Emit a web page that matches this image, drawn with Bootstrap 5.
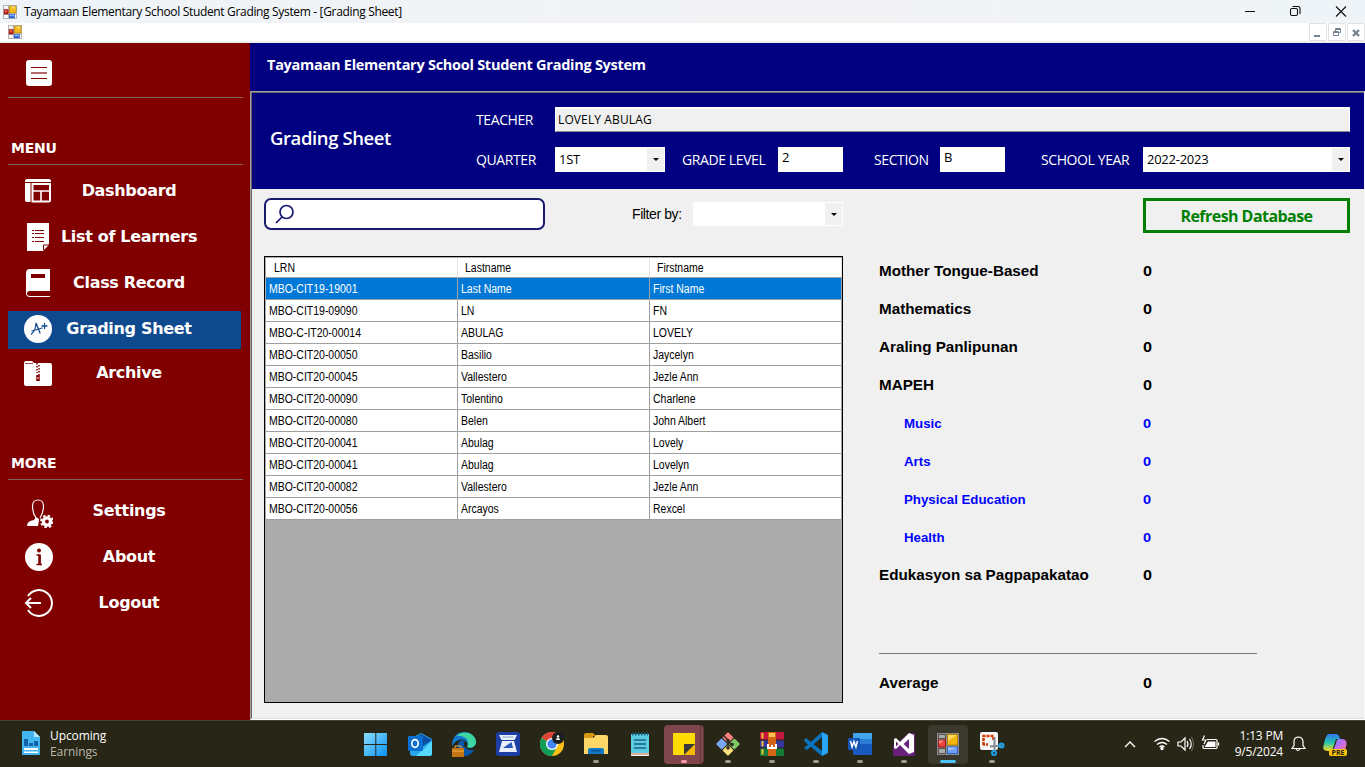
<!DOCTYPE html>
<html lang="en">
<head>
<meta charset="utf-8">
<title>Tayamaan Elementary School Student Grading System</title>
<link href="https://cdn.jsdelivr.net/npm/bootstrap@5.3.0/dist/css/bootstrap.min.css" rel="stylesheet">
<script src="https://cdn.jsdelivr.net/npm/bootstrap@5.3.0/dist/js/bootstrap.bundle.min.js"></script>
<style>
body{width:1365px;height:767px;overflow:hidden;font-family:"Open Sans","Noto Sans",sans-serif;font-size:13px;line-height:1;color:#000;background:#f0f0f0}
svg{display:block;flex:none}
span,label{white-space:nowrap}
.titlebar{height:23px;background:linear-gradient(90deg,#eef4f8,#f3f3f5 60%,#eef4f8);font-size:12px;padding-left:3px}
.titlebar .cap{margin-left:7px;letter-spacing:-.335px}
.mdibar{height:20px;background:#fff;border-bottom:2px solid #f0f0f0;padding-left:8px}
.mdibtn{width:18px;height:18px;border:1px solid #e2e2e2;border-radius:1px;margin-left:1px}
.side{width:250px;background:maroon;color:#fff;font-family:"DejaVu Sans",sans-serif;font-weight:700;padding-left:8px}
.rule{height:1px;width:235px;background:#7a6565}
.heading{font-size:14px;padding-left:3px;height:16px;line-height:16px;letter-spacing:-.2px}
.item{width:233px;height:38px;margin-bottom:8px;padding-left:15px}
.item.sel{background:#104a8e}
.item svg{margin-top:-2px}
.item .txt{width:152px;text-align:center;font-size:16px;padding-bottom:2px;letter-spacing:-.32px}
.apphead{height:48px;background:navy;color:#fff;font-weight:700;font-size:14.5px;padding:15px 0 0 17px;letter-spacing:-.27px}
.child{border-left:1px solid #a0a0a0;border-top:1px solid #a0a0a0;border-right:1px solid #f8f8f8;border-bottom:1px solid #fff}
.childin{border-left:1px solid #696969;border-top:1px solid #696969;border-bottom:1px solid #e3e3e3;height:627px}
.form{height:96px;background:navy;color:#fff;padding:14px 14px 0 18px}
.form .ttl{width:206px;font-size:18.5px;font-weight:600;padding-top:22px;letter-spacing:-.4px}
.lab{font-size:14px;letter-spacing:-.4px;flex:none}
.box{background:#fff;color:#000;height:25px;font-size:13px;padding-left:4px;letter-spacing:-.25px}
.teach{background:#f0f0f0;border:1px solid #fff;border-top-width:2px;border-bottom-color:#888;padding-left:2px;font-size:12px;letter-spacing:.12px}
.drop{width:17px;background:#f0f0f0;margin:1px;display:flex;align-items:center;justify-content:center}
.drop::after{content:"";border:3px solid transparent;border-top-color:#000;border-bottom:0}
.tools{padding:9px 14px 0 12px;height:67px}
.search{width:281px;height:32px;border:2px solid #191970;border-radius:7px;background:#fff;padding-left:9px}
.filter{font-family:"Liberation Sans",sans-serif;font-size:14px;margin-left:87px;letter-spacing:-.4px}
.refresh{width:207px;height:35px;border:3px solid green;color:green;font-weight:700;font-size:16px;letter-spacing:-.55px;border-radius:0;padding:0;line-height:1;background:none}
.gridbox{width:579px;height:447px;margin-left:12px;border:1px solid #000;background:#ababab;padding:1px 0 0 1px;flex:none}
.learners{width:576px;table-layout:fixed;border-collapse:separate;border-spacing:0;font-family:"Liberation Sans",sans-serif;font-size:12px;line-height:1;background:#fff}
.learners td,.learners th{height:22px;padding:0 0 0 3px;border-right:1px solid #a0a0a0;border-bottom:1px solid #a0a0a0;font-weight:400;vertical-align:middle}
.learners th{height:20px;padding-left:7px;border-right-color:#e5e5e5}
.learners th:first-child{padding-left:8px}
.learners span{display:inline-block;transform:scaleX(.873);transform-origin:left}
.learners .on td{background:#0078d7;color:#fff}
.marks{margin-left:36px;font-family:"Liberation Sans",sans-serif;font-weight:700;font-size:14.5px;padding-top:8px}
.mk{height:38px}
.mk .nm{width:264px}
.mk .nm span,.mk .val{display:inline-block;transform:scaleX(1.05);transform-origin:left}
.mk .val{transform:scaleX(1.12)}
.mk.sub{color:#00f;font-size:13px;padding-top:1px}.mk.sub .nm{padding-left:25px}
.mk.sub .nm span{transform:scaleX(1.02)}
.avgline{width:378px;height:1px;background:#777;margin-bottom:22px}
.taskbar{height:47px;background:#282616;border-top:1px solid #45443a;color:#fff}
.news{width:354px;padding-left:22px}
.news .two{margin-left:10px;font-size:12px;line-height:16px;letter-spacing:-.1px}
.app{width:44px;height:46px;padding-top:11px;position:relative}
.app.run::after{content:"";position:absolute;left:19px;top:39px;width:6px;height:3px;border-radius:2px;background:#9b9a92}
.tile{position:absolute;inset:4px 2px 3px;border-radius:4px;background:#3b392d}
.tile.pink{background:#80464d;border-right:4px double #5f3538}
.app.pinkrun::after{background:#ff9ba8}.app.now::after{left:14px;width:16px;background:#4cc2ff}
.app svg{position:relative}
.clock{width:62px;font-size:12px;line-height:16px;text-align:right;letter-spacing:-.2px}
</style>
</head>
<body class="d-flex flex-column">
<svg width="0" height="0" class="position-absolute">
<symbol id="form" viewBox="0 0 14 14"><path fill="#b4b4b4" d="M0 0h14v14H0z"/><path fill="#f4f4f4" d="M1 1h4v3H1zM1 10h4v3H1zM11 9.500h2V13h-2z"/><path fill="#a51212" d="M.8 4.300h4.700v5H.8z"/><path fill="#e8584a" d="M1.500 5h2.800v2.500H1.500z"/><path fill="#b58400" d="M6 .8h7.400v7.400H6z"/><path fill="#f5b921" d="M6.600 1.400h6.200v6.200H6.600z"/><path fill="#ffdf75" d="M6.900 1.600h5.300v2.600z"/><path fill="#2c62cf" d="M6 9h5.800v4.200H6z"/><path fill="#80b0ff" d="M6.600 9.500h4.600v1.700H6.600z"/></symbol>
<symbol id="formbig" viewBox="0 0 22 22"><path fill="#8c8c8c" d="M0 0h22v22H0z"/><path fill="#55554f" d="M1 1h8v5H1zM1 15h8v6H1z"/><path fill="#a9a9a9" d="M2 2h6v3H2zM2 16h6v4H2z"/><path fill="#a51212" d="M1 6.500h8v8H1z"/><path fill="#e8453c" d="M2 7.500h6v6H2z"/><path fill="#ff9186" d="M2 7.500h5L2 11z"/><path fill="#b58400" d="M10 1h11v11.500H10z"/><path fill="#f2b50d" d="M11 2h9v9.500h-9z"/><path fill="#ffd960" d="M11 2h9l-9 6z"/><path fill="#2c62cf" d="M10 13.500h11V21H10z"/><path fill="#6fa0f8" d="M11 14.500h9v5.500h-9z"/><path fill="#a5c6ff" d="M11 14.500h9l-9 3z"/></symbol>
</svg>
<div class="titlebar d-flex align-items-center">
  <svg width="14" height="14"><use href="#form"/></svg><span class="cap">Tayamaan Elementary School Student Grading System - [Grading Sheet]</span>
  <svg class="ms-auto" width="120" height="20" fill="none" stroke="#111" stroke-width="1.100" style="margin-top:-2px"><path d="M0 10.500h10M91 5.500l10 10M101 5.500l-10 10"/><rect x="45.500" y="7.500" width="7" height="7" rx="1.500"/><path d="M47.500 5.500h5.500q2 0 2 2V13"/></svg>
</div>
<div class="mdibar d-flex"><svg width="14" height="14" style="margin-top:2px"><use href="#form"/></svg>
  <div class="mdibtn ms-auto"><svg width="16" height="16" stroke="#75828f" stroke-width="2"><path d="M4 12h6"/></svg></div>
  <div class="mdibtn"><svg width="16" height="16" fill="none" stroke="#75828f"><path d="M4.500 7.500h5v4h-5zM4 8.500h6M6.500 7V4.500h5v4H10M6 5.500h6"/></svg></div>
  <div class="mdibtn"><svg width="16" height="16" stroke="#75828f" stroke-width="2.300"><path d="M5 6l6 6M11 6l-6 6"/></svg></div>
</div>
<div class="d-flex flex-grow-1">
<nav class="side d-flex flex-column">
  <svg width="26" height="26" style="margin:17px 0 11px 18px"><rect width="26" height="26" rx="3" fill="#fff"/><path d="M5 7.500h16M5 18.500h16" stroke="maroon"/><path d="M5 13h16" stroke="#b56a6a" stroke-width="2"/></svg>
  <div class="rule"></div>
  <div class="heading" style="margin-top:42px">MENU</div>
  <div class="rule" style="margin:8px 0"></div>
  <div class="item d-flex align-items-center"><svg width="30" height="28" fill="none" stroke="#fff"><path d="M2 5V4q0-2 2-2h22q2 0 2 2v1z" fill="#fff" stroke="none"/><path fill="#fff" stroke="none" d="M2 6h5.500v19H4q-2 0-2-2z"/><path d="M9.500 7v17.500H26q1 0 1-1V7z" stroke-width="2"/><path d="M10 14h17M18 14v10" stroke-width="1.600"/></svg><div class="txt">Dashboard</div></div>
  <div class="item d-flex align-items-center"><svg width="30" height="28"><path fill="#fff" d="M4 0h22v21l-6 7H4z"/><path d="M20.500 27v-5H26" fill="#fff" stroke="maroon"/><path d="M9 7.500h12M9 10.500h12M9 14.500h12M9 18.500h12" stroke="maroon" stroke-width="1.200"/><path d="M11.500 5v16" stroke="#fff"/></svg><div class="txt">List of Learners</div></div>
  <div class="item d-flex align-items-center"><svg width="30" height="28"><path fill="#fff" d="M7 0h20v22H7q-3 0-3 2.500T7 27h20v1H7q-4 0-4-4V4q0-4 4-4z"/><path fill="maroon" d="M8 5h14v4H8z"/></svg><div class="txt">Class Record</div></div>
  <div class="item sel d-flex align-items-center"><svg width="30" height="28"><circle cx="15" cy="14" r="14" fill="#fff"/><path d="M8.500 19C11 17 13 12 13 8l4 10M9 16l10-3M19 11h5M21.500 8.500v5" fill="none" stroke="#104a8e" stroke-width="1.300" stroke-linecap="round"/></svg><div class="txt">Grading Sheet</div></div>
  <div class="item d-flex align-items-center" style="margin-top:-2px"><svg width="30" height="28"><path fill="#fff" d="M1 4q0-2 2-2h6l2 2h16q2 0 2 2v19q0 2-2 2H3q-2 0-2-2z"/><path d="M2 4.500h8" stroke="maroon" stroke-width=".7"/><path d="M14 4v10M16 6v10" stroke="maroon" stroke-width="1.500" stroke-dasharray="1.600 1.400"/><path d="M15 16v6" stroke="maroon" stroke-width="3.500"/><path d="M15 18v2" stroke="#fff"/></svg><div class="txt">Archive</div></div>
  <div class="heading" style="margin-top:54px">MORE</div>
  <div class="rule" style="margin:8px 0 13px"></div>
  <div class="item d-flex align-items-center"><svg width="30" height="30" fill="none" stroke="#fff" style="margin-top:1px"><path d="M13 20c-3-4-3.500-8-3.500-12 0-8 11-8 11 0 0 4-1 8-3.500 12" stroke-width="1.200"/><path fill="#fff" stroke="none" d="M4 28q0-5 7-6l2-3 3 2q0 3-1 7z"/><circle cx="24" cy="23.500" r="3.600" stroke-width="3.400"/><circle cx="24" cy="23.500" r="5.800" stroke-width="2.200" stroke-dasharray="2.300 2.250"/></svg><div class="txt">Settings</div></div>
  <div class="item d-flex align-items-center"><svg width="30" height="28"><circle cx="16" cy="14" r="14" fill="#fff"/><circle cx="16" cy="7.500" r="2" fill="maroon"/><path d="M13.500 12H17v9.500M13.500 21.500H19" stroke="maroon" stroke-width="1.300" fill="none"/><path d="M16.500 12v9" stroke="maroon" stroke-width="2.500"/></svg><div class="txt">About</div></div>
  <div class="item d-flex align-items-center"><svg width="30" height="28" fill="none" stroke="#fff" stroke-width="2"><path d="M5 7a13 13 0 1 1 0 14"/><path d="M18 14H3M8 9l-5 5 5 5"/></svg><div class="txt">Logout</div></div>
</nav>
<main class="flex-grow-1 d-flex flex-column">
  <div class="apphead">Tayamaan Elementary School Student Grading System</div>
  <div class="child flex-grow-1"><div class="childin">
    <div class="form d-flex">
      <div class="ttl">Grading Sheet</div>
      <div class="flex-grow-1">
        <div class="d-flex align-items-center"><span class="lab" style="width:79px">TEACHER</span><div class="box teach flex-grow-1 d-flex align-items-center">LOVELY ABULAG</div></div>
        <div class="d-flex align-items-center" style="margin-top:15px">
          <span class="lab" style="width:79px">QUARTER</span><div class="box d-flex justify-content-between" style="width:110px"><span class="align-self-center">1ST</span><div class="drop"></div></div>
          <span class="lab" style="margin-left:17px;width:96px">GRADE LEVEL</span><div class="box" style="width:65px;padding-top:4px">2</div>
          <span class="lab" style="margin-left:31px;width:66px">SECTION</span><div class="box" style="width:65px;padding-top:4px">B</div>
          <span class="lab" style="margin-left:36px;width:102px">SCHOOL YEAR</span><div class="box flex-grow-1 d-flex justify-content-between"><span class="align-self-center">2022-2023</span><div class="drop"></div></div>
        </div>
      </div>
    </div>
    <div class="tools d-flex align-items-start">
      <div class="search"><svg width="22" height="28" fill="none" stroke="#191970" stroke-width="1.700"><circle cx="11.500" cy="12" r="6.500"/><path d="M7 17l-6 6"/></svg></div>
      <label class="filter" style="margin-top:9px;width:61px">Filter by:</label>
      <div class="box d-flex justify-content-end" style="width:150px;height:24px;margin-top:4px"><div class="drop"></div></div>
      <button class="btn refresh ms-auto">Refresh Database</button>
    </div>
    <div class="d-flex">
      <div class="gridbox"><table class="learners">
        <tr><th><span>LRN</span></th><th><span>Lastname</span></th><th><span>Firstname</span></th></tr>
        <tr class="on"><td><span>MBO-CIT19-19001</span></td><td><span>Last Name</span></td><td><span>First Name</span></td></tr>
        <tr><td><span>MBO-CIT19-09090</span></td><td><span>LN</span></td><td><span>FN</span></td></tr>
        <tr><td><span>MBO-C-IT20-00014</span></td><td><span>ABULAG</span></td><td><span>LOVELY</span></td></tr>
        <tr><td><span>MBO-CIT20-00050</span></td><td><span>Basilio</span></td><td><span>Jaycelyn</span></td></tr>
        <tr><td><span>MBO-CIT20-00045</span></td><td><span>Vallestero</span></td><td><span>Jezle Ann</span></td></tr>
        <tr><td><span>MBO-CIT20-00090</span></td><td><span>Tolentino</span></td><td><span>Charlene</span></td></tr>
        <tr><td><span>MBO-CIT20-00080</span></td><td><span>Belen</span></td><td><span>John Albert</span></td></tr>
        <tr><td><span>MBO-CIT20-00041</span></td><td><span>Abulag</span></td><td><span>Lovely</span></td></tr>
        <tr><td><span>MBO-CIT20-00041</span></td><td><span>Abulag</span></td><td><span>Lovelyn</span></td></tr>
        <tr><td><span>MBO-CIT20-00082</span></td><td><span>Vallestero</span></td><td><span>Jezle Ann</span></td></tr>
        <tr><td><span>MBO-CIT20-00056</span></td><td><span>Arcayos</span></td><td><span>Rexcel</span></td></tr>
      </table></div>
      <div class="marks">
        <div class="mk d-flex"><div class="nm"><span>Mother Tongue-Based</span></div><div class="val">0</div></div>
        <div class="mk d-flex"><div class="nm"><span>Mathematics</span></div><div class="val">0</div></div>
        <div class="mk d-flex"><div class="nm"><span>Araling Panlipunan</span></div><div class="val">0</div></div>
        <div class="mk d-flex"><div class="nm"><span>MAPEH</span></div><div class="val">0</div></div>
        <div class="mk sub d-flex"><div class="nm"><span>Music</span></div><div class="val">0</div></div>
        <div class="mk sub d-flex"><div class="nm"><span>Arts</span></div><div class="val">0</div></div>
        <div class="mk sub d-flex"><div class="nm"><span>Physical Education</span></div><div class="val">0</div></div>
        <div class="mk sub d-flex"><div class="nm"><span>Health</span></div><div class="val">0</div></div>
        <div class="mk d-flex"><div class="nm"><span>Edukasyon sa Pagpapakatao</span></div><div class="val">0</div></div>
        <div class="avgline" style="margin-top:47px"></div>
        <div class="d-flex mk" style="height:20px"><div class="nm"><span>Average</span></div><div class="val">0</div></div>
      </div>
    </div>
  </div></div>
</main>
</div>
<footer class="taskbar d-flex">
  <div class="news d-flex"><svg width="18" height="24" style="margin-top:10px"><path d="M0 1q0-1 1-1h11l6 6v17q0 1-1 1H1q-1 0-1-1z" fill="#43b5ef"/><path d="M12 0l6 6h-6z" fill="#b8e5fa"/><path fill="#1260a8" d="M2 8h4v7H2zM7 12h4v3H7zM12 10h4v5h-4z"/><path fill="#fff" d="M2 17h14v2H2zM2 20.500h14v1.500H2z"/></svg><div class="two" style="padding-top:7px"><div>Upcoming</div><div style="color:#b9b8ae">Earnings</div></div></div>
  <div class="app d-flex justify-content-center"><svg width="24" height="24"><defs><linearGradient id="wg" x2="1" y2="1"><stop stop-color="#8be0ff"/><stop offset="1" stop-color="#0a91f5"/></linearGradient></defs><path fill="url(#wg)" d="M0 1h11.300v11H0zM12.300 1H23v11H12.300zM0 13h11.300v11H0zM12.300 13H23v11H12.300z"/></svg></div>
  <div class="app d-flex justify-content-center"><svg width="24" height="24"><path fill="#28a8ea" d="M2 7l11-6 11 6v15q0 2-2 2H5q-3 0-3-3z"/><path fill="#0b4fa5" d="M8 5l5-3 11 6-10 7z"/><path fill="#55d8fb" d="M24 9v12q0 3-3 3H8z"/><rect y="4" width="15" height="15" rx="1" fill="#0a6fd0"/><ellipse cx="7" cy="11.500" rx="3.200" ry="3.800" fill="none" stroke="#fff" stroke-width="1.700"/></svg></div>
  <div class="app d-flex justify-content-center"><svg width="26" height="26"><path fill="#1479ce" d="M1 14C1 4 7 0 13 0c8 0 12 6 12 10 0 5-6 7-9 5 2-4-2-9-8-7-4 1-5 4-7 6z"/><path fill="#3dd6a0" d="M5 4C15-4 25 3 25 10c0 5-6 7-9 5 4-7-3-12-11-11z"/><path fill="#0a57a8" d="M7 13c0-4 4-6 7-4-3 4 1 10 9 9-2 4-6 6-10 6-5-1-7-5-6-11z"/><path fill="#c47410" d="M1 16h12v9H1z"/><path d="M1 19h12M4 16v-2h6v2" stroke="#f1b34a" fill="none"/></svg></div>
  <div class="app d-flex justify-content-center"><svg width="24" height="24"><rect width="24" height="24" rx="3" fill="#1c3ea5"/><path fill="#e9f0fb" d="M3 3h18l-2.500 5h-13zM6 9h12l3 11H3z"/><path fill="#b9c8e6" d="M6 4h12l-1 2H7z"/><path fill="#2755b8" d="M7 16l8.500-6 1.500 6z"/></svg></div>
  <div class="app d-flex justify-content-center"><svg width="24" height="24"><circle cx="12" cy="12" r="12" fill="#fbc116"/><path fill="#db4437" d="M12 12L1.600 6A12 12 0 0 1 22.400 6z"/><path fill="#0f9d58" d="M12 12L1.600 6A12 12 0 0 0 12 24l5-9z"/><circle cx="12" cy="12" r="6" fill="#fff"/><circle cx="12" cy="12" r="4.700" fill="#4285f4"/><circle cx="18" cy="6" r="6" fill="#1b1f20"/><circle cx="18" cy="4.500" r="1.300" fill="#fff"/><path fill="#fff" d="M16 8q0-2 2-2t2 2z"/></svg></div>
  <div class="app run d-flex justify-content-center"><svg width="24" height="24"><path fill="#d79a12" d="M0 3q0-2 2-2h7l3 3h-3v5H0z"/><path fill="#ffd766" d="M0 6h9l3-3h10q2 0 2 2v17H0z"/><path fill="#1278ca" d="M4 22v-4q0-2 2-2h12q2 0 2 2v4z"/><path fill="#0b5797" d="M7 18h10v1.500H7z"/></svg></div>
  <div class="app d-flex justify-content-center"><svg width="24" height="24"><path fill="#5acbe4" d="M3 2h18v20H3z"/><path d="M4 2h16" stroke="#14637b" stroke-width="3" stroke-dasharray="1.500 1.500"/><path d="M6 8h12M6 12h12M6 16h12" stroke="#17627d" stroke-width="1.500"/><path fill="#f4f4f4" d="M3 21h18v3H3z"/><path d="M3 22h18" stroke="#c66b3d" stroke-width="1"/></svg></div>
  <div class="app run pinkrun d-flex justify-content-center"><div class="tile pink"></div><svg width="24" height="24"><path fill="#ffdc00" d="M1 1h22v22H1z"/><path fill="#f5b800" d="M12 23l11-11v11z"/><path fill="#38383a" d="M12 12h11L12 23z"/></svg></div>
  <div class="app run d-flex justify-content-center"><svg width="24" height="24"><g transform="rotate(45 12 12)"><rect x="3.500" y="3.500" width="8" height="8" rx="1" fill="#ff837b"/><rect x="12.500" y="3.500" width="8" height="8" rx="1" fill="#83c769"/><rect x="3.500" y="12.500" width="8" height="8" rx="1" fill="#79a9f5"/><rect x="12.500" y="12.500" width="8" height="8" rx="1" fill="#ffe27a"/></g><path d="M8 4l4 4v9M12 9l4 4" stroke="#302b24" stroke-width="1.500" fill="none"/><g fill="#302b24"><circle cx="12" cy="8.500" r="1.800"/><circle cx="12" cy="16" r="1.800"/><circle cx="16" cy="12.500" r="1.800"/></g></svg></div>
  <div class="app run d-flex justify-content-center"><svg width="24" height="24"><rect width="24" height="7.500" rx="1" fill="#c4173d"/><rect y="8.500" width="24" height="7" rx="1" fill="#35369c"/><rect y="16.500" width="24" height="7.500" rx="1" fill="#157b37"/><path d="M2.500 1v22" stroke="#f4bf3a" stroke-width="2" stroke-dasharray="5.500 2.500"/><path fill="#d56416" d="M8 0h8v24H8z"/><path fill="#ffc54e" d="M9 1h6v4H9z"/><path fill="none" stroke="#fff" stroke-width="2" d="M8 12v4h8v-4M12 13v3"/></svg></div>
  <div class="app run d-flex justify-content-center"><svg width="24" height="24"><path fill="#0873be" d="M0 8l2-2 16 13v5L1 10zM18 5L3 18l-3-2L18 0z"/><path fill="#28a5f4" d="M18 0l6 3v18l-6 3z"/></svg></div>
  <div class="app run d-flex justify-content-center"><svg width="24" height="24"><rect x="5" y="1" width="19" height="22" rx="1" fill="#185abd"/><path fill="#41a5ee" d="M5 1h19v6H5z"/><path fill="#2b7cd3" d="M5 7h19v5H5z"/><rect y="6" width="12" height="12" rx="1" fill="#1454b4"/><path d="M2.500 9l1.600 6L6 9.500 7.900 15l1.600-6" fill="none" stroke="#fff" stroke-width="1.500"/></svg></div>
  <div class="app run d-flex justify-content-center"><svg width="24" height="24"><path fill="#68217a" d="M1 14l16-13h5q1 0 1 1v22H1z"/><path fill="#fff" fill-rule="evenodd" d="M2 7l2-1 4 4 9-9 5 2v17l-5 2-9-9-4 4-2-1zM4 9.500v5l2.500-2.500zM11.500 12l5.500 5V7z"/></svg></div>
  <div class="app run now d-flex justify-content-center"><div class="tile"></div><svg width="22" height="22" style="margin-top:1px"><use href="#formbig"/></svg></div>
  <div class="app run d-flex justify-content-center"><svg width="26" height="24"><rect x="1" width="18" height="18" rx="2" fill="#f5f6f7"/><path d="M4.500 13V4h10v4" fill="none" stroke="#d83b01" stroke-width="2.600" stroke-dasharray="3 1"/><path d="M4 12.500h6" stroke="#d83b01" stroke-width="2.600" stroke-dasharray="2 1"/><path d="M15.500 5v14M11 14.500l12-1" stroke="#828a90" stroke-width="2"/><circle cx="22.500" cy="13.500" r="2" fill="none" stroke="#1ca4ee" stroke-width="2"/><circle cx="15" cy="21" r="2" fill="none" stroke="#1ca4ee" stroke-width="2"/></svg></div>
  <svg class="ms-auto" width="101" height="46" fill="none" stroke="#fff" stroke-width="1.400"><path d="M5 26l5-5 5 5"/><path d="M34.500 20.500q7.500-6 15 0M37 23.500q5-4 10 0M39.500 26q2.500-2 5 0" stroke-width="1.300"/><circle cx="42" cy="27.500" r="1" fill="#fff"/><path d="M58 21h3l4-4v12l-4-4h-3zM67 20q2 3 0 6M69.500 18q3.500 5 0 10" stroke-width="1.200"/><path d="M71.500 16q4 7 0 14" stroke="#77756c" stroke-width="1"/><path d="M87 18.500h9q1 0 1 1v7q0 1-1 1H84q-1 0-1-1V24M98.500 21.500v3" stroke-width="1.200"/><path d="M88 20.500h7.500v5.500h-11z" fill="#fff" stroke="none"/><path d="M84.500 14.500l-2 4.500h3.500l-2 4" stroke-width="1.200"/></svg>
  <div class="clock" style="padding-top:7px"><div>1:13 PM</div><div>9/5/2024</div></div>
  <svg width="31" height="46" fill="none" stroke="#fff" stroke-width="1.200"><path d="M9 27.500l2-3v-4q0-4 4-4.500 4.500 0 5 4.500v4l2 3zM13 28q2 3 4 0"/></svg>
  <svg width="51" height="46"><defs><linearGradient id="cp" x2="0" y2="1"><stop stop-color="#3178f0"/><stop offset=".5" stop-color="#20c3ad"/><stop offset="1" stop-color="#ffdf25"/></linearGradient><linearGradient id="cq" x2="1" y2="1"><stop stop-color="#5a8fff"/><stop offset=".5" stop-color="#c66bed"/><stop offset="1" stop-color="#ff776a"/></linearGradient></defs><path fill="url(#cp)" d="M14 13h8q3 0 4 5h-4l-3 9q-1 3-5 3-7 0-4-7 1-7 4-10z"/><path fill="url(#cq)" d="M24 18h5q5 1 3 8-1 7-5 7h-9l4-11q1-4 2-4z"/><rect x="15" y="28" width="18" height="7" rx="2" fill="#ffc400"/><text x="24" y="34" text-anchor="middle" font-family="Open Sans,sans-serif" font-weight="700" font-size="7" fill="#222">PRE</text></svg>
</footer>
</body>
</html>
